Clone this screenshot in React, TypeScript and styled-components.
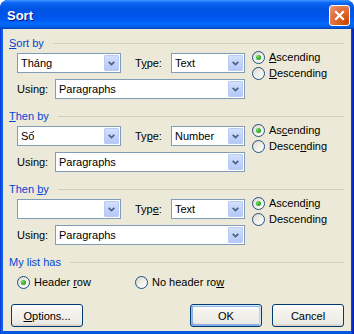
import React from "react";
import styled, { createGlobalStyle } from "styled-components";

const GlobalStyle = createGlobalStyle`
  body {
    margin: 0;
    font-family: "Liberation Sans", Arial, sans-serif;
    font-size: 11px;
    color: #000;
  }
`;

type SortSection = {
  title: React.ReactNode;
  field: string;
  type: string;
  typeLabel: React.ReactNode;
  asc: React.ReactNode;
  desc: React.ReactNode;
};

// built inside a function so the styled Key below is defined by then
function getSections(): SortSection[] {
  return [
    {
      title: (
        <>
          <Key>S</Key>ort by
        </>
      ),
      field: "Tháng",
      type: "Text",
      typeLabel: (
        <>
          T<Key>y</Key>pe:
        </>
      ),
      asc: (
        <>
          <Key>A</Key>scending
        </>
      ),
      desc: (
        <>
          <Key>D</Key>escending
        </>
      ),
    },
    {
      title: (
        <>
          <Key>T</Key>hen by
        </>
      ),
      field: "Số",
      type: "Number",
      typeLabel: (
        <>
          Ty<Key>p</Key>e:
        </>
      ),
      asc: (
        <>
          As<Key>c</Key>ending
        </>
      ),
      desc: (
        <>
          Desce<Key>n</Key>ding
        </>
      ),
    },
    {
      title: (
        <>
          Then <Key>b</Key>y
        </>
      ),
      field: "",
      type: "Text",
      typeLabel: (
        <>
          Typ<Key>e</Key>:
        </>
      ),
      asc: (
        <>
          Ascend<Key>i</Key>ng
        </>
      ),
      desc: (
        <>
          Descendin<Key>g</Key>
        </>
      ),
    },
  ];
}

function Chevron() {
  return (
    <svg width="7" height="5" viewBox="0 0 7 5">
      <path d="M0.7 0.8 L3.5 3.6 L6.3 0.8" fill="none" stroke="#4d6185" strokeWidth="1.8" />
    </svg>
  );
}

function Combo({ value, width }: { value: string; width: number }) {
  return (
    <ComboBox $width={width}>
      <ComboValue>{value}</ComboValue>
      <DropButton>
        <Chevron />
      </DropButton>
    </ComboBox>
  );
}

function Radio({ checked, children }: { checked?: boolean; children: React.ReactNode }) {
  return (
    <RadioRow>
      <RadioCircle>{checked && <RadioDot />}</RadioCircle>
      <span>{children}</span>
    </RadioRow>
  );
}

export default function App() {
  const sections = getSections();
  return (
    <>
      <GlobalStyle />
      <Window>
        <TitleBar>
          <Title>Sort</Title>
          <CloseButton>
            <svg width="11" height="11" viewBox="0 0 11 11">
              <path d="M1.2 1.2 L9.8 9.8 M9.8 1.2 L1.2 9.8" stroke="#fff" strokeWidth="2.2" />
            </svg>
          </CloseButton>
        </TitleBar>
        <Client>
          {sections.map((s, i) => (
            <Section key={i}>
              <GroupHeader>
                <GroupLabel>{s.title}</GroupLabel>
                <GroupLine />
              </GroupHeader>
              <Fields>
                <FieldRow>
                  <Combo value={s.field} width={104} />
                  <TypeLabel>{s.typeLabel}</TypeLabel>
                  <Combo value={s.type} width={74} />
                </FieldRow>
                <FieldRow>
                  <UsingLabel>Using:</UsingLabel>
                  <Combo value="Paragraphs" width={190} />
                </FieldRow>
              </Fields>
              <Radios>
                <Radio checked>{s.asc}</Radio>
                <Radio>{s.desc}</Radio>
              </Radios>
            </Section>
          ))}
          <GroupHeader>
            <GroupLabel>My list has</GroupLabel>
            <GroupLine />
          </GroupHeader>
          <ListRow>
            <ListOption>
              <Radio checked>
                Header <Key>r</Key>ow
              </Radio>
            </ListOption>
            <Radio>
              No header ro<Key>w</Key>
            </Radio>
          </ListRow>
          <ButtonRow>
            <Button>
              <Key>O</Key>ptions...
            </Button>
            <Spacer />
            <Button $default>OK</Button>
            <Button>Cancel</Button>
          </ButtonRow>
        </Client>
      </Window>
    </>
  );
}

//style
const Key = styled.u`
  text-decoration: underline;
  text-underline-offset: 1px;
`;

const Window = styled.div`
  width: 354px;
  height: 334px;
  display: flex;
  flex-direction: column;
  box-sizing: border-box;
  background: linear-gradient(90deg, #0831d9 0px, #166aee 2px, #0855dd 3px, #0855dd 351px, #0831d9 352px, #001ea0 354px);
  border-radius: 8px 8px 0 0;
  overflow: hidden;
`;

const TitleBar = styled.div`
  height: 29px;
  flex-shrink: 0;
  display: flex;
  align-items: flex-start;
  justify-content: space-between;
  padding: 5px 4px 0 7px;
  box-sizing: border-box;
  background: linear-gradient(
    180deg,
    #3d95ff 0%,
    #0a66f5 10%,
    #0054e3 30%,
    #0055eb 56%,
    #005bf5 70%,
    #026afe 82%,
    #0062ef 90%,
    #0052d6 96%,
    #0040ab 100%
  );
`;

const Title = styled.div`
  font-family: "Liberation Sans", Arial, sans-serif;
  font-weight: bold;
  font-size: 13px;
  line-height: 16px;
  margin-top: 3px;
  color: #fff;
  text-shadow: 1px 1px #0f1089;
`;

const CloseButton = styled.div`
  width: 21px;
  height: 21px;
  box-sizing: border-box;
  border: 1px solid #fff;
  border-radius: 3px;
  background: radial-gradient(circle at 85% 85%, #cc4600 0%, #dc6527 40%, #e2794e 70%, #f0a080 100%);
  display: flex;
  align-items: center;
  justify-content: center;
`;

const Client = styled.div`
  flex: 1;
  margin: 0 3px 3px 3px;
  padding: 9px 7px 4px 6px;
  background: #ece9d8;
  display: flex;
  flex-direction: column;
`;

const Section = styled.div`
  height: 73px;
  display: grid;
  grid-template-columns: 243px 1fr;
  grid-template-rows: 10px 1fr;
`;

const GroupHeader = styled.div`
  grid-column: 1 / 3;
  height: 10px;
  display: flex;
  align-items: center;
`;

const GroupLabel = styled.div`
  color: #0046d5;
  line-height: 12px;
  white-space: nowrap;
`;

const GroupLine = styled.div`
  flex: 1;
  height: 1px;
  margin-left: 9px;
  background: #d0d0bf;
`;

const Fields = styled.div`
  display: flex;
  flex-direction: column;
  gap: 6px;
  padding: 5px 0 0 8px;
`;

const FieldRow = styled.div`
  display: flex;
  align-items: center;
`;

const TypeLabel = styled.div`
  width: 36px;
  margin-left: 14px;
`;

const UsingLabel = styled.div`
  width: 38px;
`;

const ComboBox = styled.div<{ $width: number }>`
  width: ${(p) => p.$width}px;
  height: 20px;
  box-sizing: border-box;
  border: 1px solid #7f9db9;
  background: #fff;
  display: flex;
  align-items: center;
`;

const ComboValue = styled.div`
  flex: 1;
  padding-left: 3px;
  white-space: nowrap;
  overflow: hidden;
`;

const DropButton = styled.div`
  width: 15px;
  height: 16px;
  margin-right: 1px;
  box-sizing: border-box;
  border: 1px solid #b9cbf3;
  border-radius: 1px;
  background: linear-gradient(180deg, #d3e0fd 0%, #c3d4fb 50%, #b5c8f6 100%);
  display: flex;
  align-items: center;
  justify-content: center;
`;

const Radios = styled.div`
  display: flex;
  flex-direction: column;
  padding-top: 1px;
`;

const RadioRow = styled.div`
  height: 16px;
  display: flex;
  align-items: center;
  gap: 4px;
  white-space: nowrap;
`;

const RadioCircle = styled.div`
  width: 13px;
  height: 13px;
  box-sizing: border-box;
  border: 1px solid #1c5180;
  border-radius: 50%;
  background: linear-gradient(135deg, #dcd7cb 0%, #f2f1ec 55%, #ffffff 100%);
  display: flex;
  align-items: center;
  justify-content: center;
`;

const RadioDot = styled.div`
  width: 5px;
  height: 5px;
  border-radius: 50%;
  background: radial-gradient(circle at 35% 35%, #6fe05a 0%, #21a121 70%, #1a8a1a 100%);
`;

const ListRow = styled.div`
  display: flex;
  margin-top: 7px;
  padding-left: 8px;
`;

const ListOption = styled.div`
  width: 118px;
`;

const ButtonRow = styled.div`
  display: flex;
  gap: 10px;
  margin-top: 14px;
  padding-left: 2px;
`;

const Spacer = styled.div`
  flex: 1;
`;

const Button = styled.div<{ $default?: boolean }>`
  width: 72px;
  height: 23px;
  box-sizing: border-box;
  border: 1px solid #003c74;
  border-radius: 3px;
  background: linear-gradient(180deg, #ffffff 0%, #f4f3ee 30%, #ecebe6 86%, #d6d0c5 100%);
  display: flex;
  align-items: center;
  justify-content: center;
  box-shadow: ${(p) =>
    p.$default
      ? "inset -1px 1px #cee7ff, inset 1px 2px #98b8ea, inset -2px 2px #bcd4f6, inset 1px -1px #89ade4, inset 2px -2px #89ade4"
      : "none"};
`;
